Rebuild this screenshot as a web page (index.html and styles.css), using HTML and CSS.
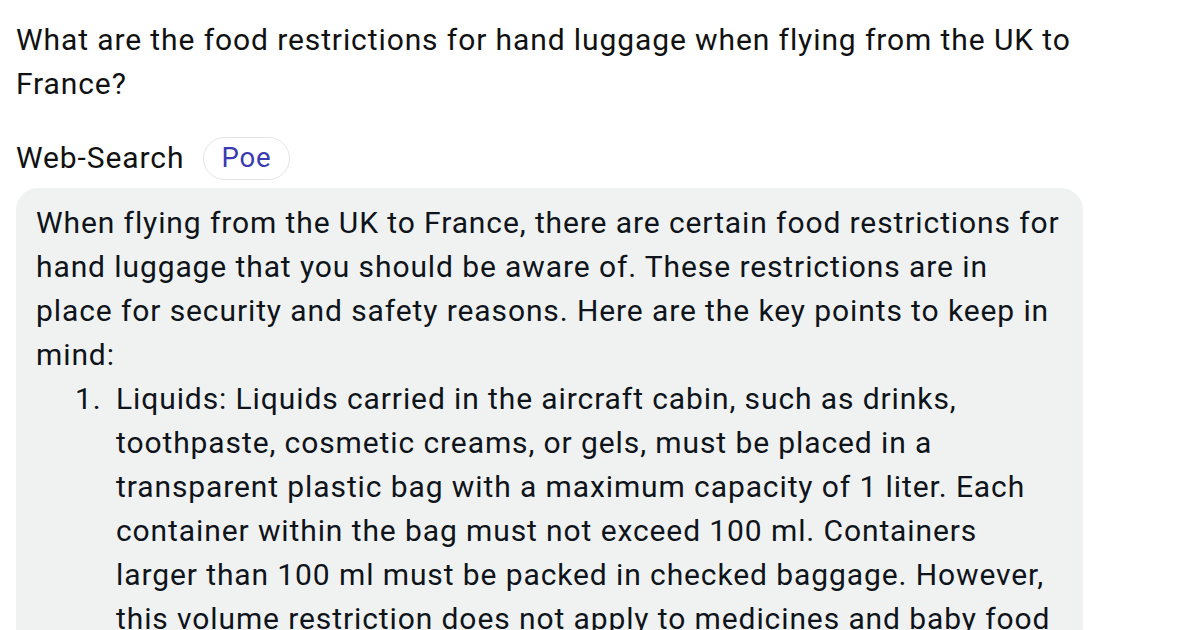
FILE: index.html
```html
<!DOCTYPE html>
<html lang="en">
<head>
<meta charset="utf-8">
<link rel="stylesheet" href="styles.css">
</head>
<body>
<main class="chat">
  <p class="question">What are the food restrictions for hand luggage when flying from the UK to France?</p>
  <div class="bot-header">
    <span class="bot-name">Web-Search</span>
    <span class="bot-tag">Poe</span>
  </div>
  <div class="bubble">
    <p class="intro">When flying from the UK to France, there are certain food restrictions for hand luggage that you should be aware of. These restrictions are in place for security and safety reasons. Here are the key points to keep in mind:</p>
    <ol class="points">
      <li>Liquids: Liquids carried in the aircraft cabin, such as drinks, toothpaste, cosmetic creams, or gels, must be placed in a transparent plastic bag with a maximum capacity of 1 liter. Each container within the bag must not exceed 100 ml. Containers larger than 100 ml must be packed in checked baggage. However, this volume restriction does not apply to medicines and baby food needed during the flight.</li>
    </ol>
  </div>
</main>
</body>
</html>
```
FILE: styles.css
```css
html, body {
  margin: 0;
  padding: 0;
  background: #ffffff;
}
body {
  font-family: Roboto, "Liberation Sans", sans-serif;
  font-size: 30px;
  line-height: 44px;
  letter-spacing: 0.9px;
  overflow: hidden;
}
.chat {
  padding: 18px 16px 0 16px;
  width: 1068px;
}
.question {
  margin: 0;
  color: #111111;
}
.bot-header {
  display: flex;
  align-items: center;
  gap: 19px;
  margin-top: 30px;
  height: 44px;
}
.bot-name {
  color: #111111;
}
.bot-tag {
  display: inline-flex;
  align-items: center;
  height: 41px;
  padding: 0 17px;
  border: 1.5px solid #e3e4e6;
  border-radius: 22px;
  color: #3b3ab0;
  font-size: 27.5px;
}
.bubble {
  margin-top: 8px;
  background: #f0f2f2;
  border-radius: 22px;
  padding: 13px 20px 20px 20px;
  width: 1067px;
  box-sizing: border-box;
  color: #0f141a;
}
.intro {
  margin: 0;
}
.points {
  margin: 0;
  padding-left: 74px;
}
.points li {
  padding-left: 6px;
}
```
